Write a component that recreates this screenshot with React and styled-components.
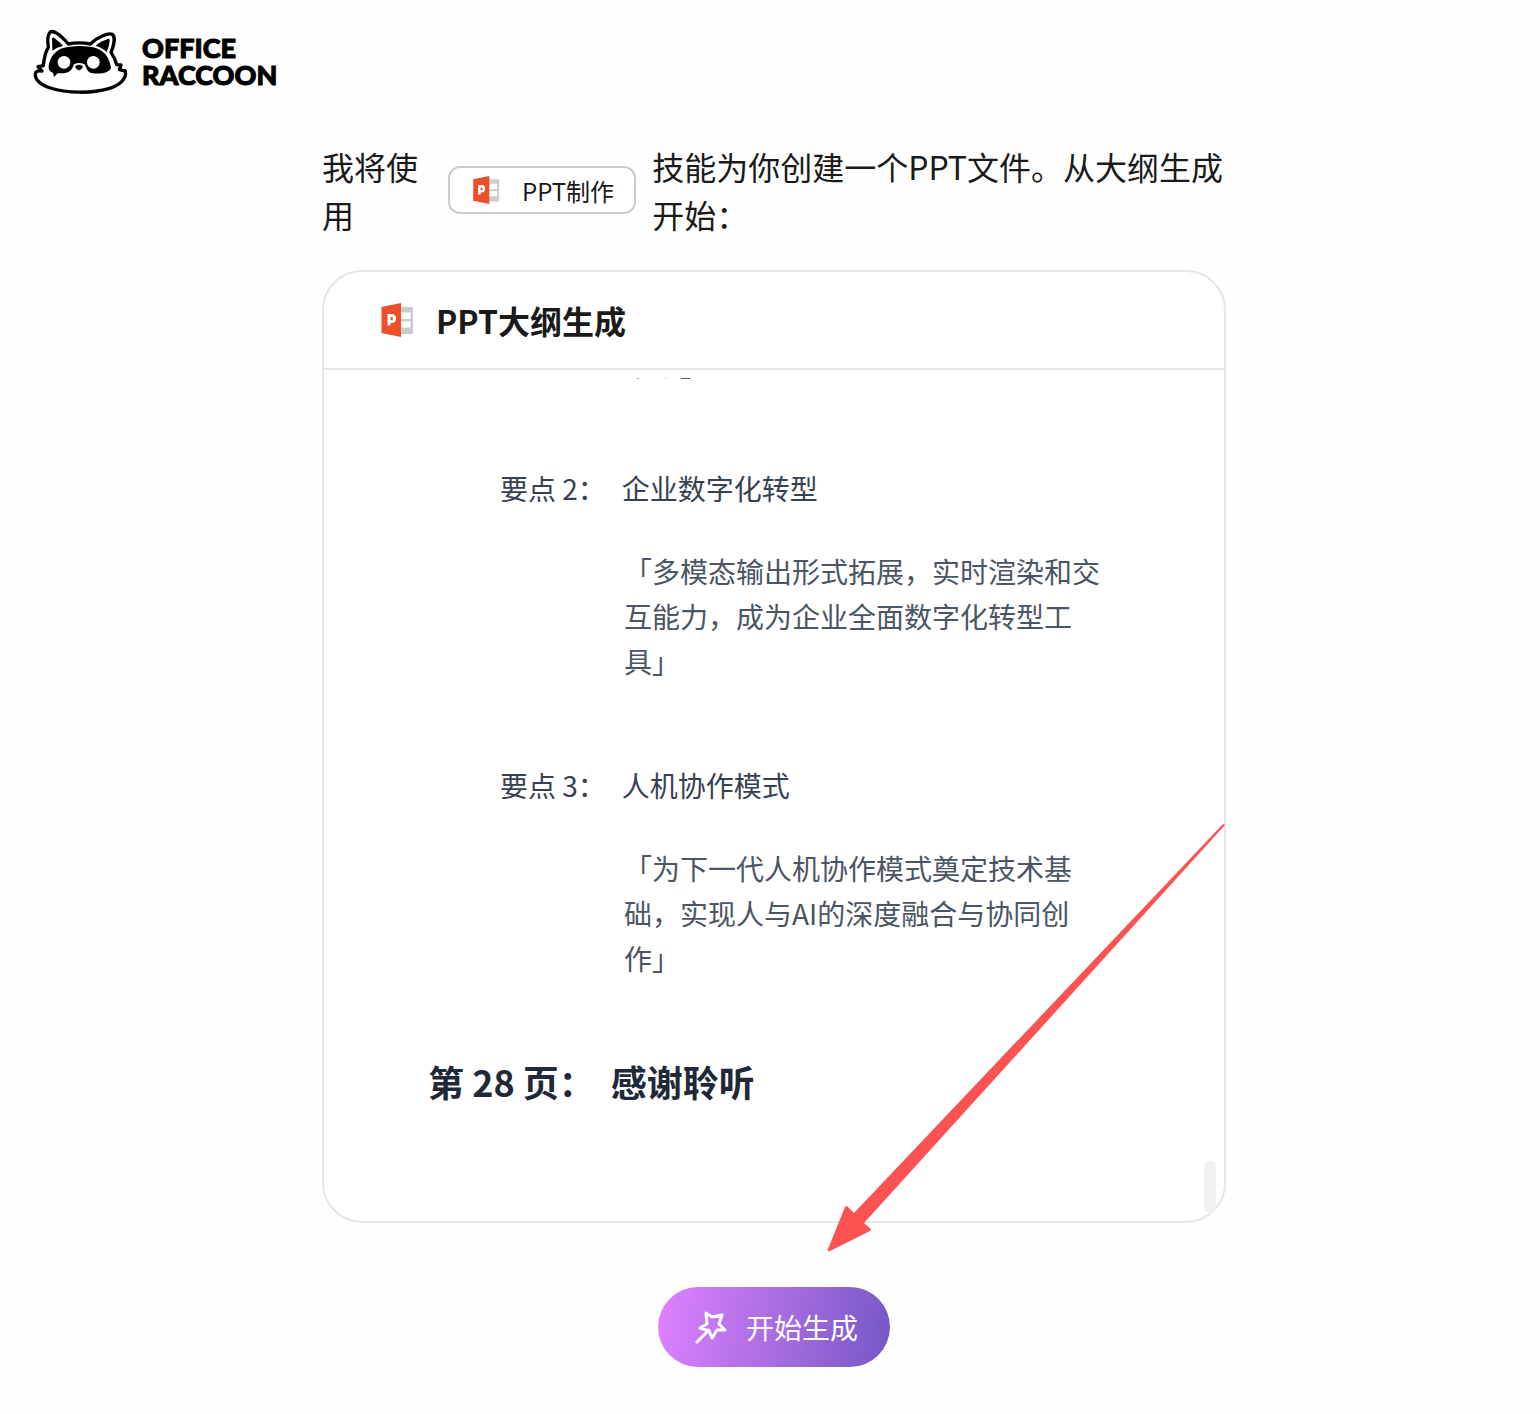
import styled, { createGlobalStyle } from "styled-components"

const GlobalStyle = createGlobalStyle`
* {
  box-sizing: border-box;
}
body {
  margin: 0;
  background: #fefefe;
  color: #1a1a1a;
  font-family: "Noto Sans CJK SC", "Noto Sans", sans-serif;
}
h2, h3, h4, p {
  margin: 0;
  font-weight: 400;
}
`;

const points = [
  { id: 1, text: "未来」" },
  { id: 2, label: "要点 2：", title: "企业数字化转型", text: "「多模态输出形式拓展，实时渲染和交互能力，成为企业全面数字化转型工具」" },
  { id: 3, label: "要点 3：", title: "人机协作模式", text: "「为下一代人机协作模式奠定技术基础，实现人与AI的深度融合与协同创作」" },
]

function RaccoonIcon() {
  return (
    <svg width="120" height="84" viewBox="0 0 360 252" aria-hidden="true">
      <path
        d="M85 82C82 62 83 45 90 37C99 29 119 42 145 72C166 68 190 68 211 72C235 49 264 38 277 43C287 52 281 78 273 97C282 110 287 122 290 134L303 135L298 149L316 153C321 177 298 196 266 206C216 221 139 220 91 204C61 194 44 178 46 162C47 154 53 151 66 153L54 140L70 137C72 115 76 96 85 82Z"
        fill="#fff" stroke="#000" strokeWidth="10" strokeLinejoin="round"
      />
      <path d="M97 86L96 56Q97 50 103 54Q116 63 129 78Q110 82 97 92Z" />
      <path d="M227 77Q243 63 263 57Q270 55 269 63Q268 79 260 96Q248 84 227 77Z" />
      <path d="M86 143C87 112 108 82 151 80Q178 76 207 80C251 83 269 112 273 144C269 158 241 164 214 159C199 156 200 140 193 133Q178 125 162 133C157 147 151 158 132 160L113 160L102 171L99 158Q87 155 86 143Z" />
      <circle cx="132" cy="127" r="19" fill="#fff" />
      <circle cx="220" cy="127" r="19" fill="#fff" />
      <path d="M164 139Q177 128 190 139Q188 149 177 152Q166 149 164 139Z" stroke="#fff" strokeWidth="2" />
    </svg>
  )
}

function PptIcon({ size }) {
  return (
    <svg width={size} height={size} viewBox="0 0 34 34" aria-hidden="true">
      <path d="M20 4h13v27H20z" fill="#ccc" />
      <path d="M20 9.5h10.5v6.500H20zM20 18.5h10.5v6H20z" fill="#fff" />
      <path d="M1.5 4L21 0V34L1.5 30Z" fill="#ed4f2a" />
      <path d="M9 22.500V12.500H11.500Q14.500 12.500 14.500 15.500T11.500 18.500H9" fill="none" stroke="#fff" strokeWidth="3" />
    </svg>
  )
}

function WandIcon() {
  return (
    <svg width="34" height="34" viewBox="0 0 34 34" fill="none" stroke="#fff" strokeWidth="3" strokeLinejoin="round" strokeLinecap="round" aria-hidden="true">
      <path d="M12 3L18 7L28 5L25 14L31 20L23 20L18 28L15 21L6 18L13 14Z" />
      <path d="M15 20L3 32" />
    </svg>
  )
}

function App() {
  return (
    <>
      <GlobalStyle />
      <Header>
        <RaccoonIcon />
        <Brand>
          <span>OFFICE</span>
          <span>RACCOON</span>
        </Brand>
      </Header>
      <Main>
        <Intro>
          <IntroStart>我将使用</IntroStart>
          <SkillButton type="button">
            <PptIcon size={28} />
            PPT制作
          </SkillButton>
          <IntroEnd>技能为你创建一个PPT文件。从大纲生成开始：</IntroEnd>
        </Intro>
        <Card>
          <CardHeader>
            <PptIcon size={34} />
            <h2>PPT大纲生成</h2>
          </CardHeader>
          <Outline>
            {points.map((point) => (
              <Point key={point.id}>
                {point.title && (
                  <PointTitle>
                    <span>{point.label}</span>
                    <span>{point.title}</span>
                  </PointTitle>
                )}
                <PointText>{point.text}</PointText>
              </Point>
            ))}
            <PageTitle>
              <span>第 28 页：</span>
              <span>感谢聆听</span>
            </PageTitle>
          </Outline>
          <ScrollThumb />
          <Arrow width="400" height="431" viewBox="0 0 400 431" aria-hidden="true">
            <path d="M397 3L399 4L38 402L45 408L44 410L4 430Q1 431 2 428L19 386L21 385L28 392Z" fill="#fc5352" />
          </Arrow>
        </Card>
        <StartButton type="button">
          <WandIcon />
          开始生成
        </StartButton>
      </Main>
    </>
  )
}

const Header = styled.header`
display: flex;
align-items: center;
padding: 20px 20px 0;
`;

const Brand = styled.div`
display: flex;
flex-direction: column;
padding: 0 0 2px 2px;
font-family: Lato, sans-serif;
font-size: 27px;
font-weight: 900;
line-height: 27px;
color: #000;
-webkit-text-stroke: 1px #000;
`;

const Main = styled.main`
display: flex;
flex-direction: column;
align-items: center;
box-sizing: content-box;
max-width: 904px;
margin: 0 auto;
padding: 38px 0 46px 8px;
`;

const Intro = styled.div`
display: flex;
align-items: center;
gap: 16px;
width: 100%;
font-size: 32px;
line-height: 48px;
`;

const IntroStart = styled.p`
flex: 0 0 110px;
`;

const IntroEnd = styled.p`
flex: 1;
`;

const SkillButton = styled.button`
display: flex;
align-items: center;
flex-shrink: 0;
gap: 22px;
height: 48px;
padding: 0 20px 0 22px;
border: 2px solid #ccc;
border-radius: 12px;
background: #fff;
color: #1a1a1a;
font-family: inherit;
font-size: 24px;
cursor: pointer;
`;

const Card = styled.section`
position: relative;
width: 100%;
margin-top: 32px;
border: 2px solid #e5e5e5;
border-radius: 40px;
background: #fff;
`;

const CardHeader = styled.div`
display: flex;
align-items: center;
gap: 22px;
height: 98px;
padding: 0 56px;
border-bottom: 2px solid #e5e5e5;

h2{
  font-size: 32px;
  font-weight: 700;
  line-height: 48px;
}
`;

const Outline = styled.div`
display: flex;
flex-direction: column;
justify-content: flex-end;
height: 835px;
margin: 8px 0;
padding: 0 100px 112px 104px;
overflow: hidden;
`;

const Point = styled.div`
flex-shrink: 0;
padding: 0 0 80px 72px;
`;

const PointTitle = styled.h4`
display: flex;
gap: 16px;
margin-bottom: 40px;
color: #374151;
font-size: 28px;
line-height: 42px;
`;

const PointText = styled.p`
width: 480px;
margin-left: 124px;
color: #4b5563;
font-size: 28px;
line-height: 45px;
`;

const PageTitle = styled.h3`
display: flex;
flex-shrink: 0;
gap: 16px;
color: #1f2937;
font-size: 36px;
line-height: 40px;

span{
  font-weight: 700;
}
`;

const ScrollThumb = styled.div`
position: absolute;
right: 8px;
bottom: 8px;
width: 12px;
height: 52px;
border-radius: 6px;
background: #f1f1f1;
`;

const Arrow = styled.svg`
position: absolute;
right: -2px;
bottom: -31px;
pointer-events: none;
`;

const StartButton = styled.button`
display: flex;
align-items: center;
justify-content: center;
gap: 18px;
width: 232px;
height: 80px;
margin-top: 64px;
padding: 0 0 0 4px;
border: none;
border-radius: 40px;
background: linear-gradient(100deg, #df82ff, #7458c4);
color: #fff;
font-family: inherit;
font-size: 28px;
cursor: pointer;
`;

export default App
